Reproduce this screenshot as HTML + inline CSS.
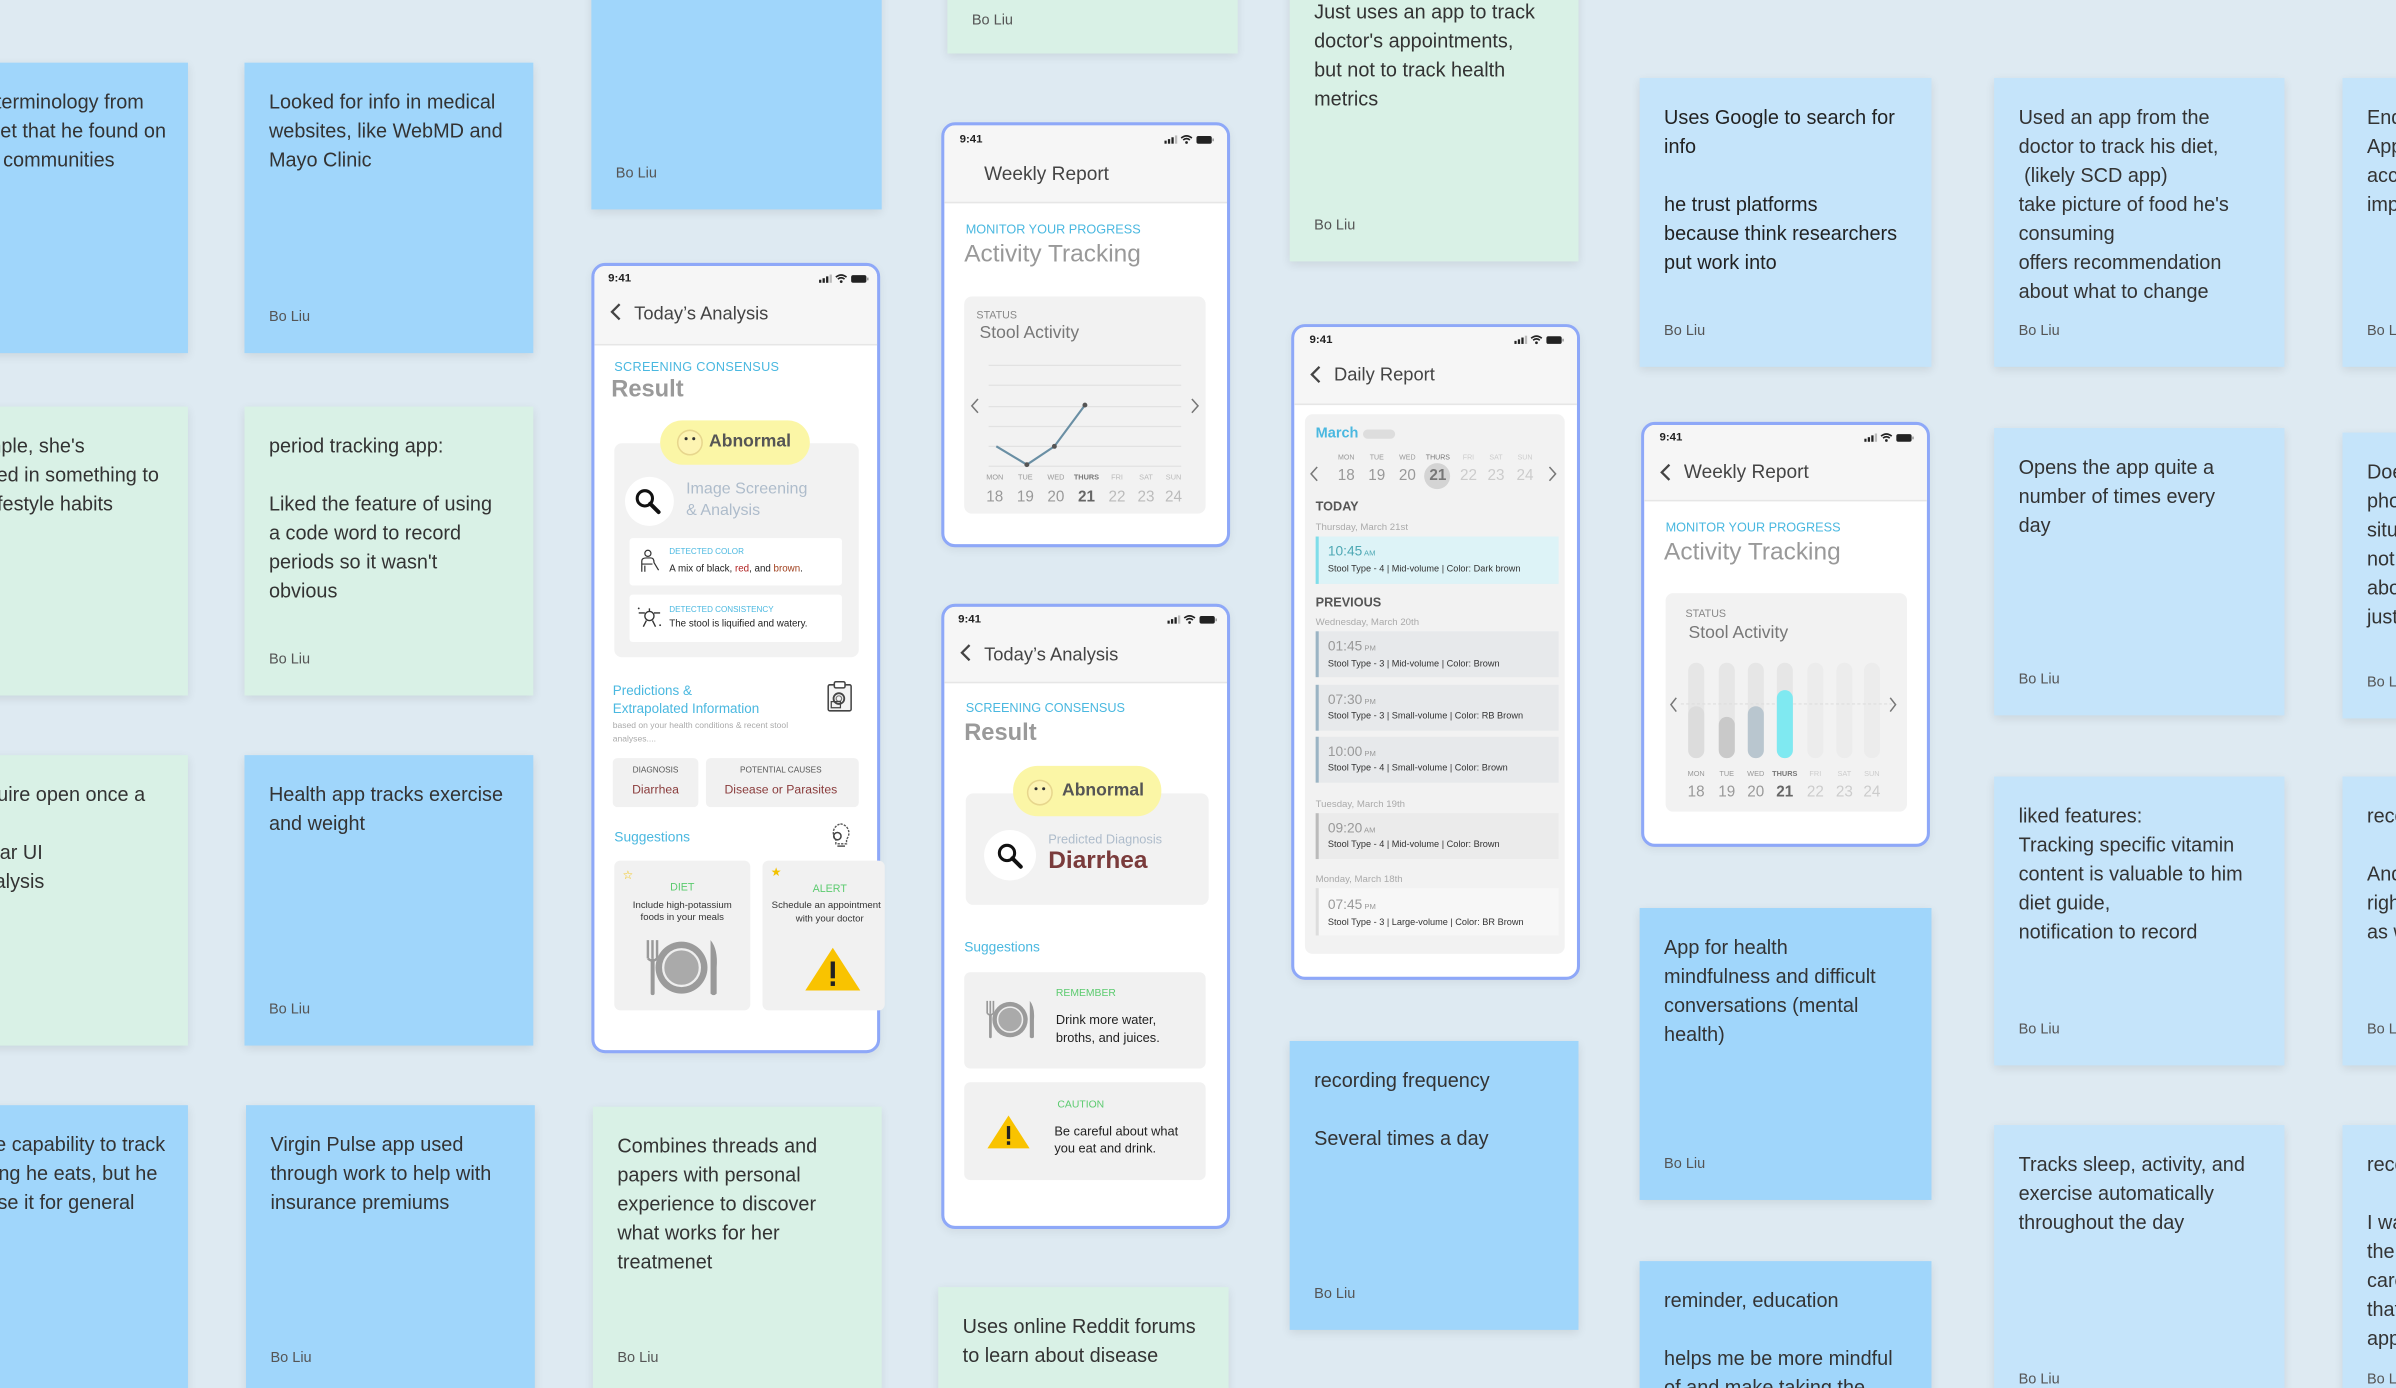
<!DOCTYPE html>
<html><head><meta charset="utf-8">
<style>
html,body{margin:0;padding:0;width:2396px;height:1388px;overflow:hidden;background:#deeaf2;}
#s{position:absolute;left:0;top:0;width:1568px;height:908px;transform:scale(1.52806,1.5286);transform-origin:0 0;font-family:"Liberation Sans",sans-serif;overflow:hidden;background:#deeaf2;}
.s{position:absolute;box-sizing:border-box;padding:15.5px 16px 0 16px;font-size:13px;line-height:19px;color:#333;box-shadow:0 2px 6px rgba(0,0,0,.09);overflow:hidden;white-space:nowrap}
.s .b{position:absolute;left:16px;bottom:18px;font-size:9.5px;line-height:11px;color:#555}
.bl{background:#a0d6fb}.lb{background:#c5e4fa;color:#222}.gr{background:#d9f1e6}
.ph{position:absolute;box-sizing:border-box;border:2px solid #8ea8f8;border-radius:9px;background:#fff;overflow:hidden;box-shadow:0 2px 6px rgba(0,0,0,.06)}
.ph .hd{position:absolute;left:0;top:0;right:0;background:#f6f6f6;border-bottom:1px solid #e6e6e6}
.a{position:absolute;white-space:nowrap;line-height:1;transform:translateY(-50%)}
.ac{position:absolute;white-space:nowrap;line-height:1;transform:translate(-50%,-50%);text-align:center}
.r{position:absolute}
.cy{color:#4ab8e0}
.gn{color:#5ccb6f}
</style></head><body><div id="s">

<!-- Column A -->
<div class="s bl" style="left:-70px;top:41px;width:193px;height:190px;text-align:right;padding-right:0"><div style="margin-right:35px">Learned terminology from</div><div style="margin-right:21px">the internet that he found on</div><div style="margin-right:48px">online communities</div></div>
<div class="s gr" style="left:-70px;top:266px;width:193px;height:189px;text-align:right;padding-right:0"><div style="margin-right:72px">For example, she's</div><div style="margin-right:19px">interested in something to</div><div style="margin-right:52px">change lifestyle habits</div></div>
<div class="s gr" style="left:-70px;top:494px;width:193px;height:190px;text-align:right;padding-right:0"><div style="margin-right:28px">Require open once a</div><div>&nbsp;</div><div style="margin-right:95px">Familiar UI</div><div style="margin-right:94px">Analysis</div></div>
<div class="s bl" style="left:-70px;top:723px;width:193px;height:190px;text-align:right;padding-right:0"><div style="margin-right:17px">Wants the capability to track</div><div style="margin-right:20px">everything he eats, but he</div><div style="margin-right:46px">doesn't use it for general</div></div>

<!-- Column B -->
<div class="s bl" style="left:160px;top:41px;width:189px;height:190px">Looked for info in medical<br>websites, like WebMD and<br>Mayo Clinic<div class="b">Bo Liu</div></div>
<div class="s gr" style="left:160px;top:266px;width:189px;height:189px">period tracking app:<br><br>Liked the feature of using<br>a code word to record<br>periods so it wasn't<br>obvious<div class="b">Bo Liu</div></div>
<div class="s bl" style="left:160px;top:494px;width:189px;height:190px">Health app tracks exercise<br>and weight<div class="b">Bo Liu</div></div>
<div class="s bl" style="left:161px;top:723px;width:189px;height:200px">Virgin Pulse app used<br>through work to help with<br>insurance premiums<div class="b" style="bottom:29px">Bo Liu</div></div>

<!-- Column C -->
<div class="s bl" style="left:387px;top:-60px;width:190px;height:197px"><div class="b">Bo Liu</div></div>
<div class="s gr" style="left:388px;top:724px;width:189px;height:200px">Combines threads and<br>papers with personal<br>experience to discover<br>what works for her<br>treatmenet<div class="b" style="bottom:30px">Bo Liu</div></div>

<!-- Column D -->
<div class="s gr" style="left:620px;top:-60px;width:190px;height:95px"><div class="b" style="bottom:16px">Bo Liu</div></div>
<div class="s gr" style="left:614px;top:842px;width:190px;height:100px">Uses online Reddit forums<br>to learn about disease</div>

<!-- Column E -->
<div class="s gr" style="left:844px;top:-60px;width:189px;height:231px;padding-top:58px">Just uses an app to track<br>doctor's appointments,<br>but not to track health<br>metrics<div class="b">Bo Liu</div></div>
<div class="s bl" style="left:844px;top:681px;width:189px;height:189px">recording frequency<br><br>Several times a day<div class="b">Bo Liu</div></div>

<!-- Column F -->
<div class="s lb" style="left:1073px;top:51px;width:191px;height:189px">Uses Google to search for<br>info<br><br>he trust platforms<br>because think researchers<br>put work into<div class="b">Bo Liu</div></div>
<div class="s bl" style="left:1073px;top:594px;width:191px;height:191px">App for health<br>mindfulness and difficult<br>conversations (mental<br>health)<div class="b">Bo Liu</div></div>
<div class="s bl" style="left:1073px;top:825px;width:191px;height:120px">reminder, education<br><br>helps me be more mindful<br>of and make taking the</div>

<!-- Column G -->
<div class="s lb" style="left:1305px;top:51px;width:190px;height:189px;color:#333">Used an app from the<br>doctor to track his diet,<br>&nbsp;(likely SCD app)<br>take picture of food he's<br>consuming<br>offers recommendation<br>about what to change<div class="b">Bo Liu</div></div>
<div class="s lb" style="left:1305px;top:280px;width:190px;height:188px;color:#333">Opens the app quite a<br>number of times every<br>day<div class="b">Bo Liu</div></div>
<div class="s lb" style="left:1305px;top:508px;width:190px;height:189px;color:#333">liked features:<br>Tracking specific vitamin<br>content is valuable to him<br>diet guide,<br>notification to record<div class="b">Bo Liu</div></div>
<div class="s lb" style="left:1305px;top:736px;width:190px;height:190px;color:#333">Tracks sleep, activity, and<br>exercise automatically<br>throughout the day<div class="b">Bo Liu</div></div>

<!-- Column H -->
<div class="s lb" style="left:1533px;top:51px;width:190px;height:189px;color:#333">Ended up not using<br>Apple health because<br>accuracy was not<br>important<div class="b">Bo Liu</div></div>
<div class="s lb" style="left:1533px;top:283px;width:190px;height:187px;color:#333">Doesn't like to take<br>photos in some<br>situations, does<br>not want to think<br>about it if it's<br>just normal<div class="b">Bo Liu</div></div>
<div class="s lb" style="left:1533px;top:508px;width:190px;height:189px;color:#333">recommendations<br><br>And knowing what's<br>right and wrong<br>as well<div class="b">Bo Liu</div></div>
<div class="s lb" style="left:1533px;top:736px;width:190px;height:190px;color:#333">recording<br><br>I want to know if<br>the app actually<br>cares about me<br>that the<br>app is<div class="b">Bo Liu</div></div>

<!-- ===== Phone 1: Today's Analysis ===== -->
<div class="ph" style="left:387px;top:172px;width:189px;height:517px"><div class="hd" style="height:51px"></div></div>
<div class="a" style="left:398px;top:182px;font-size:7.5px;font-weight:bold;color:#222">9:41</div>
<svg class="r" style="left:536px;top:179px" width="33" height="7" viewBox="0 0 33 7"><rect x="0" y="4" width="1.5" height="2" fill="#222"/><rect x="2.3" y="3" width="1.5" height="3" fill="#222"/><rect x="4.6" y="1.8" width="1.5" height="4.2" fill="#222"/><rect x="6.9" y="0.6" width="1.5" height="5.4" fill="#bbb"/><path d="M11 2.3 Q14.5 -0.5 18 2.3 M12.3 3.6 Q14.5 1.8 16.7 3.6" stroke="#222" stroke-width="1.1" fill="none"/><circle cx="14.5" cy="5.2" r="0.9" fill="#222"/><rect x="21" y="1" width="10" height="5" rx="1.3" fill="#222"/><rect x="31.4" y="2.6" width="1" height="1.8" fill="#999"/></svg>
<svg class="r" style="left:399px;top:198px" width="8" height="12" viewBox="0 0 8 12"><path d="M6.5 1 L1.5 6 L6.5 11" stroke="#444" stroke-width="1.5" fill="none"/></svg>
<div class="a" style="left:415px;top:205px;font-size:12px;color:#444">Today’s Analysis</div>
<div class="a cy" style="left:402px;top:240px;font-size:8.3px;letter-spacing:.2px">SCREENING CONSENSUS</div>
<div class="a" style="left:400px;top:255px;font-size:15.5px;color:#9a9a9a;font-weight:bold">Result</div>
<div class="r" style="left:402px;top:290px;width:160px;height:140px;background:#f2f2f2;border-radius:5px"></div>
<div class="r" style="left:432px;top:275px;width:98px;height:29px;background:#fbf6a6;border-radius:15px"></div>
<div class="r" style="left:443px;top:281px;width:15px;height:15px;border-radius:50%;background:#fdf4b2;border:1px solid #e7d68d"></div>
<div class="r" style="left:448px;top:286px;width:2px;height:2px;background:#333;border-radius:50%"></div><div class="r" style="left:453px;top:286px;width:2px;height:2px;background:#333;border-radius:50%"></div>
<div class="a" style="left:464px;top:290px;font-size:11.5px;font-weight:bold;color:#555">Abnormal</div>
<div class="r" style="left:409px;top:312px;width:32px;height:32px;border-radius:50%;background:#fff"></div>
<svg class="r" style="left:415px;top:319px" width="18" height="18" viewBox="0 0 18 18"><circle cx="7" cy="7" r="5" stroke="#111" stroke-width="2" fill="none"/><path d="M10.5 10.5 L16 16" stroke="#111" stroke-width="2.6" stroke-linecap="round"/></svg>
<div class="a" style="left:449px;top:320px;font-size:10.5px;color:#aebccb">Image Screening</div>
<div class="a" style="left:449px;top:334px;font-size:10.5px;color:#aebccb">&amp; Analysis</div>
<div class="r" style="left:412px;top:352px;width:139px;height:31px;background:#fff;border-radius:2px"></div>
<div class="r" style="left:412px;top:389px;width:139px;height:31px;background:#fff;border-radius:2px"></div>
<svg class="r" style="left:418px;top:359px" width="14" height="16" viewBox="0 0 14 16"><circle cx="6" cy="3" r="2" stroke="#333" fill="none" stroke-width=".8"/><path d="M2 15 V8 Q2 6 5 6 H8 Q10 6 10 9 L13 14 M2 10 H9 M4 15 V11" stroke="#333" fill="none" stroke-width=".8"/></svg>
<svg class="r" style="left:417px;top:397px" width="16" height="14" viewBox="0 0 16 14"><circle cx="8" cy="6" r="3" stroke="#333" fill="none" stroke-width=".9"/><path d="M1 4 H5 M11 4 H15 M4 13 L6 9 M12 13 L10 9 M8 1 V3" stroke="#333" stroke-width=".9"/><circle cx="1" cy="1" r=".6" fill="#333"/><circle cx="15" cy="12" r=".6" fill="#333"/></svg>
<div class="a cy" style="left:438px;top:362px;font-size:5.3px">DETECTED COLOR</div>
<div class="a" style="left:438px;top:372.5px;font-size:6.4px;color:#222">A mix of black, <span style="color:#b02020">red</span>, and <span style="color:#a0401e">brown</span>.</div>
<div class="a cy" style="left:438px;top:399.5px;font-size:5.3px">DETECTED CONSISTENCY</div>
<div class="a" style="left:438px;top:408.5px;font-size:6.4px;color:#222">The stool is liquified and watery.</div>
<div class="a cy" style="left:401px;top:452px;font-size:8.8px">Predictions &amp;</div>
<div class="a cy" style="left:401px;top:464px;font-size:8.8px">Extrapolated Information</div>
<svg class="r" style="left:541px;top:445px" width="18" height="21" viewBox="0 0 18 21"><rect x="1" y="3" width="15" height="17" rx="1" stroke="#444" fill="#f4f4f4" stroke-width="1"/><rect x="5" y="1" width="7" height="4" rx="1" stroke="#444" fill="#fff" stroke-width="1"/><circle cx="8" cy="12" r="3.5" stroke="#444" fill="none" stroke-width="1.2"/><circle cx="8" cy="12" r="1.8" stroke="#777" fill="none" stroke-width=".8"/><rect x="3" y="14" width="6" height="4" stroke="#444" fill="none" stroke-width=".8"/></svg>
<div class="a" style="left:401px;top:476px;font-size:5.6px;color:#aaa">based on your health conditions &amp; recent stool</div>
<div class="a" style="left:401px;top:485px;font-size:5.6px;color:#aaa">analyses....</div>
<div class="r" style="left:401px;top:496px;width:56px;height:32px;background:#f1f1f1;border-radius:3px"></div>
<div class="r" style="left:462px;top:496px;width:100px;height:32px;background:#f1f1f1;border-radius:3px"></div>
<div class="ac" style="left:429px;top:505px;font-size:5.4px;color:#555">DIAGNOSIS</div>
<div class="ac" style="left:429px;top:517px;font-size:8px;color:#8a3c3c">Diarrhea</div>
<div class="ac" style="left:511px;top:505px;font-size:5.4px;color:#555">POTENTIAL CAUSES</div>
<div class="ac" style="left:511px;top:517px;font-size:8px;color:#8a3c3c">Disease or Parasites</div>
<div class="a cy" style="left:402px;top:548px;font-size:9px">Suggestions</div>
<svg class="r" style="left:542px;top:538px" width="16" height="17" viewBox="0 0 16 17"><path d="M8 1 A6 6 0 0 1 12 11 V14 H5 V11 A6 6 0 0 1 8 1 Z" stroke="#555" fill="none" stroke-width=".9" stroke-dasharray="1.5 .8"/><circle cx="6" cy="9" r="2.4" stroke="#444" fill="none" stroke-width="1"/><path d="M6 15.5 H11" stroke="#555"/></svg>
<div class="r" style="left:402px;top:563px;width:89px;height:98px;background:#f1f1f1;border-radius:4px"></div>
<div class="r" style="left:499px;top:563px;width:80px;height:98px;background:#f1f1f1;border-radius:4px"></div>
<div class="ac" style="left:411px;top:573px;font-size:8px;color:#f2c200">☆</div>
<div class="ac gn" style="left:446.5px;top:581px;font-size:7px">DIET</div>
<div class="ac" style="left:446.5px;top:593px;font-size:6.3px;color:#333">Include high-potassium</div>
<div class="ac" style="left:446.5px;top:601px;font-size:6.3px;color:#333">foods in your meals</div>
<svg class="r" style="left:421px;top:613px" width="50" height="40" viewBox="0 0 50 40"><path d="M3 2 V14 M6 2 V14 M9 2 V14 M3 14 Q6 17 9 14" stroke="#999" stroke-width="1.6" fill="none"/><rect x="4.8" y="14" width="2.6" height="24" rx="1.2" fill="#999"/><circle cx="25" cy="20" r="17" fill="#9b9b9b"/><circle cx="25" cy="20" r="12" fill="#aaa" stroke="#eee" stroke-width="1.5"/><path d="M44 2 Q49 8 48 20 V37 Q46 39 44 37 Z" fill="#999"/></svg>
<div class="ac" style="left:508px;top:571px;font-size:8px;color:#f2c200">★</div>
<div class="ac gn" style="left:543px;top:582px;font-size:7px">ALERT</div>
<div class="a" style="left:505px;top:593px;font-size:6.3px;color:#333">Schedule an appointment</div>
<div class="ac" style="left:543px;top:602px;font-size:6.3px;color:#333">with your doctor</div>
<svg class="r" style="left:526px;top:619px" width="38" height="30" viewBox="0 0 38 30"><path d="M19 1 L37 29 H1 Z" fill="#f9c300"/><rect x="17.6" y="10" width="2.8" height="11" fill="#222"/><rect x="17.6" y="23" width="2.8" height="3" fill="#222"/></svg>

<!-- ===== Phone 2: Weekly Report (line) ===== -->
<div class="ph" style="left:616px;top:80px;width:189px;height:278px"><div class="hd" style="height:50px"></div></div>
<div class="a" style="left:628px;top:91px;font-size:7.5px;font-weight:bold;color:#222">9:41</div>
<svg class="r" style="left:762px;top:88px" width="33" height="7" viewBox="0 0 33 7"><rect x="0" y="4" width="1.5" height="2" fill="#222"/><rect x="2.3" y="3" width="1.5" height="3" fill="#222"/><rect x="4.6" y="1.8" width="1.5" height="4.2" fill="#222"/><rect x="6.9" y="0.6" width="1.5" height="5.4" fill="#bbb"/><path d="M11 2.3 Q14.5 -0.5 18 2.3 M12.3 3.6 Q14.5 1.8 16.7 3.6" stroke="#222" stroke-width="1.1" fill="none"/><circle cx="14.5" cy="5.2" r="0.9" fill="#222"/><rect x="21" y="1" width="10" height="5" rx="1.3" fill="#222"/><rect x="31.4" y="2.6" width="1" height="1.8" fill="#999"/></svg>
<div class="a" style="left:644px;top:114px;font-size:12.5px;color:#444">Weekly Report</div>
<div class="a cy" style="left:632px;top:150px;font-size:8.3px">MONITOR YOUR PROGRESS</div>
<div class="a" style="left:631px;top:167px;font-size:16px;color:#999">Activity Tracking</div>
<div class="r" style="left:631px;top:194px;width:158px;height:142px;background:#f2f2f2;border-radius:5px"></div>
<div class="a" style="left:639px;top:207px;font-size:7px;color:#888">STATUS</div>
<div class="a" style="left:641px;top:219px;font-size:11.5px;color:#777">Stool Activity</div>
<svg class="r" style="left:632px;top:235px" width="158" height="75" viewBox="632 235 158 75"><g stroke="#e2e2e2" stroke-width=".8"><path d="M647 239H773M647 252H773M647 266H773M647 279H773M647 292H773M647 305H773"/></g><path d="M652 292 L672 304 L690 292 L710 265" stroke="#6a8fa4" stroke-width="1.4" fill="none"/><circle cx="672" cy="304" r="1.6" fill="#555"/><circle cx="690" cy="292" r="1.6" fill="#555"/><circle cx="710" cy="265" r="1.6" fill="#555"/><path d="M640 261 L636 265.5 L640 270 M780 261 L784 265.5 L780 270" stroke="#777" stroke-width="1" fill="none"/></svg>
<div class="ac" style="left:651px;top:314px;font-size:4.8px;color:#999">MON</div><div class="ac" style="left:671px;top:314px;font-size:4.8px;color:#999">TUE</div><div class="ac" style="left:691px;top:314px;font-size:4.8px;color:#999">WED</div><div class="ac" style="left:711px;top:314px;font-size:4.8px;color:#777;font-weight:bold">THURS</div><div class="ac" style="left:731px;top:314px;font-size:4.8px;color:#bbb">FRI</div><div class="ac" style="left:750px;top:314px;font-size:4.8px;color:#bbb">SAT</div><div class="ac" style="left:768px;top:314px;font-size:4.8px;color:#bbb">SUN</div>
<div class="ac" style="left:651px;top:326px;font-size:10px;color:#999">18</div><div class="ac" style="left:671px;top:326px;font-size:10px;color:#999">19</div><div class="ac" style="left:691px;top:326px;font-size:10px;color:#999">20</div><div class="ac" style="left:711px;top:326px;font-size:10px;color:#666;font-weight:bold">21</div><div class="ac" style="left:731px;top:326px;font-size:10px;color:#bbb">22</div><div class="ac" style="left:750px;top:326px;font-size:10px;color:#bbb">23</div><div class="ac" style="left:768px;top:326px;font-size:10px;color:#bbb">24</div>

<!-- ===== Phone 3: Today's Analysis 2 ===== -->
<div class="ph" style="left:616px;top:395px;width:189px;height:409px"><div class="hd" style="height:49px"></div></div>
<div class="a" style="left:627px;top:405px;font-size:7.5px;font-weight:bold;color:#222">9:41</div>
<svg class="r" style="left:764px;top:402px" width="33" height="7" viewBox="0 0 33 7"><rect x="0" y="4" width="1.5" height="2" fill="#222"/><rect x="2.3" y="3" width="1.5" height="3" fill="#222"/><rect x="4.6" y="1.8" width="1.5" height="4.2" fill="#222"/><rect x="6.9" y="0.6" width="1.5" height="5.4" fill="#bbb"/><path d="M11 2.3 Q14.5 -0.5 18 2.3 M12.3 3.6 Q14.5 1.8 16.7 3.6" stroke="#222" stroke-width="1.1" fill="none"/><circle cx="14.5" cy="5.2" r="0.9" fill="#222"/><rect x="21" y="1" width="10" height="5" rx="1.3" fill="#222"/><rect x="31.4" y="2.6" width="1" height="1.8" fill="#999"/></svg>
<svg class="r" style="left:628px;top:421px" width="8" height="12" viewBox="0 0 8 12"><path d="M6.5 1 L1.5 6 L6.5 11" stroke="#444" stroke-width="1.5" fill="none"/></svg>
<div class="a" style="left:644px;top:428px;font-size:12px;color:#444">Today’s Analysis</div>
<div class="a cy" style="left:632px;top:463px;font-size:8.3px">SCREENING CONSENSUS</div>
<div class="a" style="left:631px;top:480px;font-size:15.5px;color:#9a9a9a;font-weight:bold">Result</div>
<div class="r" style="left:632px;top:519px;width:159px;height:73px;background:#f2f2f2;border-radius:5px"></div>
<div class="r" style="left:663px;top:501px;width:97px;height:33px;background:#fbf6a6;border-radius:16px"></div>
<div class="r" style="left:672px;top:510px;width:15px;height:15px;border-radius:50%;background:#fdf4b2;border:1px solid #e7d68d"></div>
<div class="r" style="left:677px;top:515px;width:2px;height:2px;background:#333;border-radius:50%"></div><div class="r" style="left:682px;top:515px;width:2px;height:2px;background:#333;border-radius:50%"></div>
<div class="a" style="left:695px;top:518px;font-size:11.5px;font-weight:bold;color:#555">Abnormal</div>
<div class="r" style="left:644px;top:543px;width:34px;height:33px;border-radius:50%;background:#fff"></div>
<svg class="r" style="left:652px;top:551px" width="18" height="18" viewBox="0 0 18 18"><circle cx="7" cy="7" r="5" stroke="#111" stroke-width="2" fill="none"/><path d="M10.5 10.5 L16 16" stroke="#111" stroke-width="2.6" stroke-linecap="round"/></svg>
<div class="a" style="left:686px;top:549px;font-size:8.4px;color:#aebccb">Predicted Diagnosis</div>
<div class="a" style="left:686px;top:564px;font-size:16px;font-weight:bold;color:#7a3b3b">Diarrhea</div>
<div class="a cy" style="left:631px;top:620px;font-size:9px">Suggestions</div>
<div class="r" style="left:631px;top:636px;width:158px;height:63px;background:#f1f1f1;border-radius:4px"></div>
<div class="r" style="left:631px;top:708px;width:158px;height:64px;background:#f1f1f1;border-radius:4px"></div>
<svg class="r" style="left:644px;top:653px" width="34" height="28" viewBox="0 0 50 40"><path d="M3 2 V14 M6 2 V14 M9 2 V14 M3 14 Q6 17 9 14" stroke="#999" stroke-width="1.6" fill="none"/><rect x="4.8" y="14" width="2.6" height="24" rx="1.2" fill="#999"/><circle cx="25" cy="20" r="17" fill="#9b9b9b"/><circle cx="25" cy="20" r="12" fill="#aaa" stroke="#eee" stroke-width="1.5"/><path d="M44 2 Q49 8 48 20 V37 Q46 39 44 37 Z" fill="#999"/></svg>
<div class="a gn" style="left:691px;top:651px;font-size:6.8px">REMEMBER</div>
<div class="a" style="left:691px;top:667px;font-size:8.4px;color:#222">Drink more water,</div>
<div class="a" style="left:691px;top:679px;font-size:8.4px;color:#222">broths, and juices.</div>
<svg class="r" style="left:644px;top:729px" width="32" height="23" viewBox="0 0 38 30"><path d="M19 1 L37 29 H1 Z" fill="#f9c300"/><rect x="17.6" y="10" width="2.8" height="11" fill="#222"/><rect x="17.6" y="23" width="2.8" height="3" fill="#222"/></svg>
<div class="a gn" style="left:692px;top:724px;font-size:6.8px">CAUTION</div>
<div class="a" style="left:690px;top:740px;font-size:8.4px;color:#222">Be careful about what</div>
<div class="a" style="left:690px;top:751px;font-size:8.4px;color:#222">you eat and drink.</div>

<!-- ===== Phone 4: Daily Report ===== -->
<div class="ph" style="left:845px;top:212px;width:189px;height:429px"><div class="hd" style="height:50px"></div></div>
<div class="a" style="left:857px;top:222px;font-size:7.5px;font-weight:bold;color:#222">9:41</div>
<svg class="r" style="left:991px;top:219px" width="33" height="7" viewBox="0 0 33 7"><rect x="0" y="4" width="1.5" height="2" fill="#222"/><rect x="2.3" y="3" width="1.5" height="3" fill="#222"/><rect x="4.6" y="1.8" width="1.5" height="4.2" fill="#222"/><rect x="6.9" y="0.6" width="1.5" height="5.4" fill="#bbb"/><path d="M11 2.3 Q14.5 -0.5 18 2.3 M12.3 3.6 Q14.5 1.8 16.7 3.6" stroke="#222" stroke-width="1.1" fill="none"/><circle cx="14.5" cy="5.2" r="0.9" fill="#222"/><rect x="21" y="1" width="10" height="5" rx="1.3" fill="#222"/><rect x="31.4" y="2.6" width="1" height="1.8" fill="#999"/></svg>
<svg class="r" style="left:857px;top:239px" width="8" height="12" viewBox="0 0 8 12"><path d="M6.5 1 L1.5 6 L6.5 11" stroke="#444" stroke-width="1.5" fill="none"/></svg>
<div class="a" style="left:873px;top:245px;font-size:12px;color:#444">Daily Report</div>
<div class="r" style="left:854px;top:271px;width:170px;height:353px;background:#f2f2f2;border-radius:5px"></div>
<div class="a cy" style="left:861px;top:284px;font-size:9.5px;font-weight:bold">March</div>
<div class="r" style="left:892px;top:280.5px;width:21px;height:6px;background:#ddd;border-radius:3px"></div>
<svg class="r" style="left:856px;top:304px" width="166" height="12" viewBox="0 0 166 12"><path d="M6 1.5 L2 6 L6 10.5 M158 1.5 L162 6 L158 10.5" stroke="#777" stroke-width="1" fill="none"/></svg>
<div class="r" style="left:932px;top:303px;width:17px;height:17px;border-radius:50%;background:#d4d4d4"></div>
<div class="ac" style="left:881px;top:300px;font-size:4.6px;color:#999">MON</div><div class="ac" style="left:901px;top:300px;font-size:4.6px;color:#999">TUE</div><div class="ac" style="left:921px;top:300px;font-size:4.6px;color:#999">WED</div><div class="ac" style="left:941px;top:300px;font-size:4.6px;color:#777">THURS</div><div class="ac" style="left:961px;top:300px;font-size:4.6px;color:#ccc">FRI</div><div class="ac" style="left:979px;top:300px;font-size:4.6px;color:#ccc">SAT</div><div class="ac" style="left:998px;top:300px;font-size:4.6px;color:#ccc">SUN</div>
<div class="ac" style="left:881px;top:312px;font-size:10px;color:#999">18</div><div class="ac" style="left:901px;top:312px;font-size:10px;color:#999">19</div><div class="ac" style="left:921px;top:312px;font-size:10px;color:#999">20</div><div class="ac" style="left:941px;top:312px;font-size:10px;color:#777;font-weight:bold">21</div><div class="ac" style="left:961px;top:312px;font-size:10px;color:#ccc">22</div><div class="ac" style="left:979px;top:312px;font-size:10px;color:#ccc">23</div><div class="ac" style="left:998px;top:312px;font-size:10px;color:#ccc">24</div>
<div class="a" style="left:861px;top:331px;font-size:8.3px;color:#555;font-weight:bold">TODAY</div>
<div class="a" style="left:861px;top:346px;font-size:6.3px;color:#aaa">Thursday, March 21st</div>
<div class="r" style="left:861px;top:351px;width:159px;height:31px;background:#ddf3f7;border-left:2px solid #7fdde9;box-sizing:border-box"></div>
<div class="a" style="left:869px;top:361px;font-size:9px;color:#4ea8b4">10:45<span style="font-size:5px"> AM</span></div>
<div class="a" style="left:869px;top:373px;font-size:6px;color:#333">Stool Type - 4 | Mid-volume | Color: Dark brown</div>
<div class="a" style="left:861px;top:394px;font-size:8.3px;color:#555;font-weight:bold">PREVIOUS</div>
<div class="a" style="left:861px;top:408px;font-size:6.3px;color:#aaa">Wednesday, March 20th</div>
<div class="r" style="left:861px;top:413px;width:159px;height:30px;background:#e7e9eb;border-left:2px solid #9bb4c4;box-sizing:border-box"></div>
<div class="a" style="left:869px;top:423px;font-size:9px;color:#999">01:45<span style="font-size:5px"> PM</span></div>
<div class="a" style="left:869px;top:435px;font-size:6px;color:#333">Stool Type - 3 | Mid-volume | Color: Brown</div>
<div class="r" style="left:861px;top:448px;width:159px;height:30px;background:#e7e9eb;border-left:2px solid #9bb4c4;box-sizing:border-box"></div>
<div class="a" style="left:869px;top:458px;font-size:9px;color:#999">07:30<span style="font-size:5px"> PM</span></div>
<div class="a" style="left:869px;top:469px;font-size:6px;color:#333">Stool Type - 3 | Small-volume | Color: RB Brown</div>
<div class="r" style="left:861px;top:482px;width:159px;height:30px;background:#e7e9eb;border-left:2px solid #9bb4c4;box-sizing:border-box"></div>
<div class="a" style="left:869px;top:492px;font-size:9px;color:#999">10:00<span style="font-size:5px"> PM</span></div>
<div class="a" style="left:869px;top:503px;font-size:6px;color:#333">Stool Type - 4 | Small-volume | Color: Brown</div>
<div class="a" style="left:861px;top:527px;font-size:6.3px;color:#aaa">Tuesday, March 19th</div>
<div class="r" style="left:861px;top:532px;width:159px;height:30px;background:#ebebeb;border-left:2px solid #bbb;box-sizing:border-box"></div>
<div class="a" style="left:869px;top:542px;font-size:9px;color:#999">09:20<span style="font-size:5px"> AM</span></div>
<div class="a" style="left:869px;top:553px;font-size:6px;color:#333">Stool Type - 4 | Mid-volume | Color: Brown</div>
<div class="a" style="left:861px;top:576px;font-size:6.3px;color:#aaa">Monday, March 18th</div>
<div class="r" style="left:861px;top:581px;width:159px;height:31px;background:#f7f7f7;border-left:2px solid #ddd;box-sizing:border-box"></div>
<div class="a" style="left:869px;top:592px;font-size:9px;color:#999">07:45<span style="font-size:5px"> PM</span></div>
<div class="a" style="left:869px;top:604px;font-size:6px;color:#333">Stool Type - 3 | Large-volume | Color: BR Brown</div>

<!-- ===== Phone 5: Weekly Report (bars) ===== -->
<div class="ph" style="left:1074px;top:276px;width:189px;height:278px"><div class="hd" style="height:49px"></div></div>
<div class="a" style="left:1086px;top:286px;font-size:7.5px;font-weight:bold;color:#222">9:41</div>
<svg class="r" style="left:1220px;top:283px" width="33" height="7" viewBox="0 0 33 7"><rect x="0" y="4" width="1.5" height="2" fill="#222"/><rect x="2.3" y="3" width="1.5" height="3" fill="#222"/><rect x="4.6" y="1.8" width="1.5" height="4.2" fill="#222"/><rect x="6.9" y="0.6" width="1.5" height="5.4" fill="#bbb"/><path d="M11 2.3 Q14.5 -0.5 18 2.3 M12.3 3.6 Q14.5 1.8 16.7 3.6" stroke="#222" stroke-width="1.1" fill="none"/><circle cx="14.5" cy="5.2" r="0.9" fill="#222"/><rect x="21" y="1" width="10" height="5" rx="1.3" fill="#222"/><rect x="31.4" y="2.6" width="1" height="1.8" fill="#999"/></svg>
<svg class="r" style="left:1086px;top:303px" width="8" height="12" viewBox="0 0 8 12"><path d="M6.5 1 L1.5 6 L6.5 11" stroke="#444" stroke-width="1.5" fill="none"/></svg>
<div class="a" style="left:1102px;top:309px;font-size:12.5px;color:#444">Weekly Report</div>
<div class="a cy" style="left:1090px;top:345px;font-size:8.3px">MONITOR YOUR PROGRESS</div>
<div class="a" style="left:1089px;top:362px;font-size:16px;color:#999">Activity Tracking</div>
<div class="r" style="left:1090px;top:388px;width:158px;height:143px;background:#f2f2f2;border-radius:5px"></div>
<div class="a" style="left:1103px;top:402px;font-size:7px;color:#888">STATUS</div>
<div class="a" style="left:1105px;top:414.5px;font-size:11.5px;color:#777">Stool Activity</div>
<svg class="r" style="left:1090px;top:430px" width="158" height="70" viewBox="1090 430 158 70"><g fill="#e6e6e6"><rect x="1104.8" y="433.6" width="10.5" height="62.4" rx="5.2"/><rect x="1124.8" y="433.6" width="10.5" height="62.4" rx="5.2"/><rect x="1143.8" y="433.6" width="10.5" height="62.4" rx="5.2"/><rect x="1162.8" y="433.6" width="10.5" height="62.4" rx="5.2"/><rect x="1182.8" y="433.6" width="10.5" height="62.4" rx="5.2" fill="#ececec"/><rect x="1201.8" y="433.6" width="10.5" height="62.4" rx="5.2" fill="#ececec"/><rect x="1219.8" y="433.6" width="10.5" height="62.4" rx="5.2" fill="#ececec"/></g><path d="M1100 460.5 H1238" stroke="#ddd" stroke-width=".7" stroke-dasharray="2 1.5"/><rect x="1104.8" y="462" width="10.5" height="34" rx="5.2" fill="#dcdcdc"/><rect x="1124.8" y="469" width="10.5" height="27" rx="5.2" fill="#c9c9c9"/><rect x="1143.8" y="462" width="10.5" height="34" rx="5.2" fill="#b9c6cf"/><rect x="1162.8" y="451.5" width="10.5" height="44.5" rx="5.2" fill="#7fe9f1"/><path d="M1097 456.5 L1093.5 461 L1097 465.5 M1237 456.5 L1240.5 461 L1237 465.5" stroke="#777" stroke-width="1" fill="none"/></svg>
<div class="ac" style="left:1110px;top:508px;font-size:4.8px;color:#999">MON</div><div class="ac" style="left:1130px;top:508px;font-size:4.8px;color:#999">TUE</div><div class="ac" style="left:1149px;top:508px;font-size:4.8px;color:#999">WED</div><div class="ac" style="left:1168px;top:508px;font-size:4.8px;color:#777;font-weight:bold">THURS</div><div class="ac" style="left:1188px;top:508px;font-size:4.8px;color:#ccc">FRI</div><div class="ac" style="left:1207px;top:508px;font-size:4.8px;color:#ccc">SAT</div><div class="ac" style="left:1225px;top:508px;font-size:4.8px;color:#ccc">SUN</div>
<div class="ac" style="left:1110px;top:519px;font-size:10px;color:#999">18</div><div class="ac" style="left:1130px;top:519px;font-size:10px;color:#999">19</div><div class="ac" style="left:1149px;top:519px;font-size:10px;color:#999">20</div><div class="ac" style="left:1168px;top:519px;font-size:10px;color:#666;font-weight:bold">21</div><div class="ac" style="left:1188px;top:519px;font-size:10px;color:#ccc">22</div><div class="ac" style="left:1207px;top:519px;font-size:10px;color:#ccc">23</div><div class="ac" style="left:1225px;top:519px;font-size:10px;color:#ccc">24</div>

</div></body></html>
